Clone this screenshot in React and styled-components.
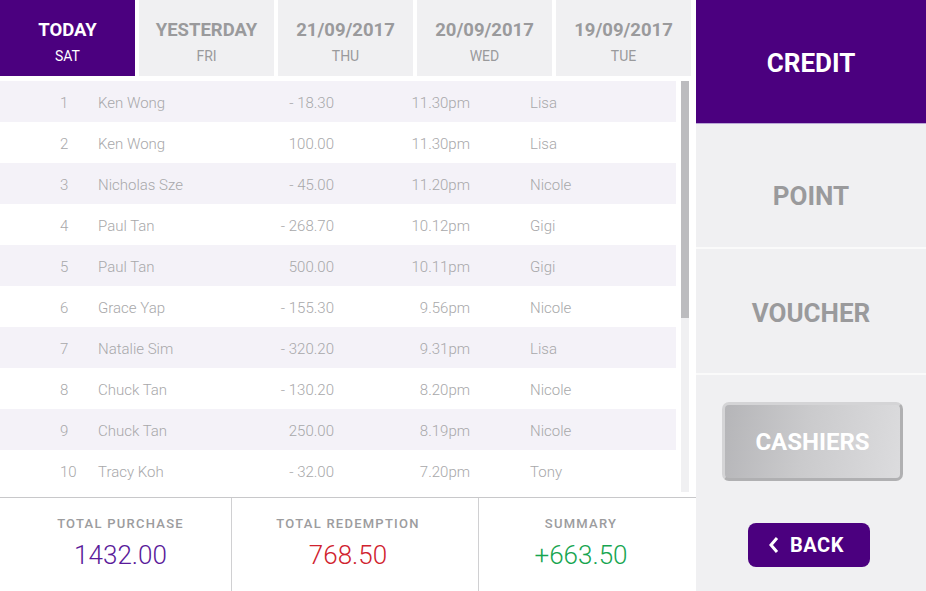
import React from 'react';
import styled, { createGlobalStyle } from 'styled-components';

const PURPLE = '#4b007f';

const GlobalStyle = createGlobalStyle`
  html, body { margin: 0; padding: 0; }
  body {
    font-family: Roboto, "Liberation Sans", sans-serif;
    background: #fff;
  }
`;

const Screen = styled.div`
  display: flex;
  width: 926px;
  height: 591px;
  overflow: hidden;
`;

const Main = styled.div`
  width: 696px;
  display: flex;
  flex-direction: column;
  background: #fff;
`;

const Tabs = styled.div`
  display: flex;
  gap: 4px;
  width: 691px;
  height: 76px;
`;

const Tab = styled.div`
  width: 135px;
  flex: none;
  display: flex;
  flex-direction: column;
  align-items: center;
  background: ${p => p.active ? PURPLE : '#f0f0f2'};
  color: ${p => p.active ? '#fff' : '#9a9a9c'};
`;

const TabTitle = styled.div`
  font-size: 18.5px;
  font-weight: 700;
  margin-top: 20px;
  line-height: 20px;
`;

const TabSub = styled.div`
  font-size: 14px;
  margin-top: 8px;
  line-height: 16px;
`;

const Body = styled.div`
  display: flex;
  padding-top: 5px;
  height: 416px;
`;

const List = styled.div`
  width: 676px;
`;

const Row = styled.div`
  display: grid;
  grid-template-columns: 38px 150px 86px 136px 60px 1fr;
  align-items: center;
  box-sizing: border-box;
  height: 41px;
  padding: 2px 0 0 60px;
  background: ${p => p.striped ? '#f4f2f8' : '#fff'};
  color: #a8a8aa;
  font-size: 15px;
  font-weight: 300;
`;

const Cell = styled.div`
  text-align: ${p => p.right ? 'right' : 'left'};
  white-space: nowrap;
`;

const Track = styled.div`
  margin-left: 5px;
  width: 8px;
  height: 411px;
  background: #f0f0f2;
`;

const Thumb = styled.div`
  height: 237px;
  background: #bcbcbf;
`;

const Footer = styled.div`
  flex: 1;
  display: grid;
  grid-template-columns: 231px 247px 1fr;
  border-top: 1px solid #c8c8ca;
`;

const Stat = styled.div`
  display: flex;
  flex-direction: column;
  align-items: center;
  padding-top: 18px;
  padding-left: ${p => p.nudge > 0 ? p.nudge : 0}px;
  padding-right: ${p => p.nudge < 0 ? -p.nudge : 0}px;
  border-left: ${p => p.first ? 'none' : '1px solid #d0d0d2'};
`;

const StatLabel = styled.div`
  font-size: 13px;
  font-weight: 500;
  letter-spacing: 1.25px;
  color: #9c9c9e;
  line-height: 16px;
`;

const StatValue = styled.div`
  font-size: 26px;
  font-weight: 300;
  margin-top: 8px;
  line-height: 30px;
  color: ${p => p.color};
`;

const Side = styled.div`
  width: 230px;
  background: #f0f0f2;
  display: flex;
  flex-direction: column;
`;

const SideItem = styled.div`
  height: ${p => p.h}px;
  flex: none;
  display: flex;
  align-items: center;
  justify-content: center;
  padding-top: ${p => p.shift || 0}px;
  box-sizing: border-box;
  font-size: 26px;
  font-weight: 700;
  background: ${p => p.active ? PURPLE : '#f0f0f2'};
  color: ${p => p.active ? '#fff' : '#9a9a9c'};
  border-bottom: ${p => p.active ? '1px solid #b9a6d6' : '2px solid #fafafa'};
`;

const SideActions = styled.div`
  display: flex;
  flex-direction: column;
  align-items: center;
  padding-top: 27px;
`;

const CashiersButton = styled.button`
  width: 181px;
  height: 79px;
  margin-left: 3px;
  border: 3px solid #d4d4d6;
  border-right-color: #b0b0b2;
  border-bottom-color: #b0b0b2;
  border-radius: 7px;
  background: linear-gradient(100deg, #b5b5b8 0%, #cacacc 45%, #dcdcde 100%);
  color: #fff;
  font-family: Roboto, "Liberation Sans", sans-serif;
  font-size: 24px;
  font-weight: 700;
  padding: 0;
`;

const BackButton = styled.button`
  margin: 42px 4px 0 0;
  width: 122px;
  height: 44px;
  border: none;
  border-radius: 8px;
  background: ${PURPLE};
  color: #fff;
  font-family: Roboto, "Liberation Sans", sans-serif;
  font-size: 20px;
  font-weight: 700;
  letter-spacing: 0.5px;
  display: flex;
  align-items: center;
  justify-content: center;
  gap: 10px;
  padding: 0 6px 0 0;
`;

const tabs = [
  { title: 'TODAY', sub: 'SAT', active: true },
  { title: 'YESTERDAY', sub: 'FRI' },
  { title: '21/09/2017', sub: 'THU' },
  { title: '20/09/2017', sub: 'WED' },
  { title: '19/09/2017', sub: 'TUE' },
];

const rows = [
  ['Ken Wong', '- 18.30', '11.30pm', 'Lisa'],
  ['Ken Wong', '100.00', '11.30pm', 'Lisa'],
  ['Nicholas Sze', '- 45.00', '11.20pm', 'Nicole'],
  ['Paul Tan', '- 268.70', '10.12pm', 'Gigi'],
  ['Paul Tan', '500.00', '10.11pm', 'Gigi'],
  ['Grace Yap', '- 155.30', '9.56pm', 'Nicole'],
  ['Natalie Sim', '- 320.20', '9.31pm', 'Lisa'],
  ['Chuck Tan', '- 130.20', '8.20pm', 'Nicole'],
  ['Chuck Tan', '250.00', '8.19pm', 'Nicole'],
  ['Tracy Koh', '- 32.00', '7.20pm', 'Tony'],
];

export default function App() {
  return (
    <Screen>
      <GlobalStyle />
      <Main>
        <Tabs>
          {tabs.map(t => (
            <Tab key={t.title} active={t.active}>
              <TabTitle>{t.title}</TabTitle>
              <TabSub>{t.sub}</TabSub>
            </Tab>
          ))}
        </Tabs>
        <Body>
          <List>
            {rows.map((r, i) => (
              <Row key={i} striped={i % 2 === 0}>
                <Cell>{i + 1}</Cell>
                <Cell>{r[0]}</Cell>
                <Cell right>{r[1]}</Cell>
                <Cell right>{r[2]}</Cell>
                <Cell />
                <Cell>{r[3]}</Cell>
              </Row>
            ))}
          </List>
          <Track><Thumb /></Track>
        </Body>
        <Footer>
          <Stat first nudge={10}>
            <StatLabel>TOTAL PURCHASE</StatLabel>
            <StatValue color="#5a1a9a">1432.00</StatValue>
          </Stat>
          <Stat nudge={-14}>
            <StatLabel>TOTAL REDEMPTION</StatLabel>
            <StatValue color="#d0222e">768.50</StatValue>
          </Stat>
          <Stat nudge={-13}>
            <StatLabel>SUMMARY</StatLabel>
            <StatValue color="#16a550">+663.50</StatValue>
          </Stat>
        </Footer>
      </Main>
      <Side>
        <SideItem active h={124} shift={3}>CREDIT</SideItem>
        <SideItem h={125} shift={20}>POINT</SideItem>
        <SideItem h={126} shift={4}>VOUCHER</SideItem>
        <SideActions>
          <CashiersButton>CASHIERS</CashiersButton>
          <BackButton>
            <svg width="12" height="18" viewBox="0 0 12 18" fill="none">
              <path d="M9 2 L3 9 L9 16" stroke="#fff" strokeWidth="3" />
            </svg>
            BACK
          </BackButton>
        </SideActions>
      </Side>
    </Screen>
  );
}
